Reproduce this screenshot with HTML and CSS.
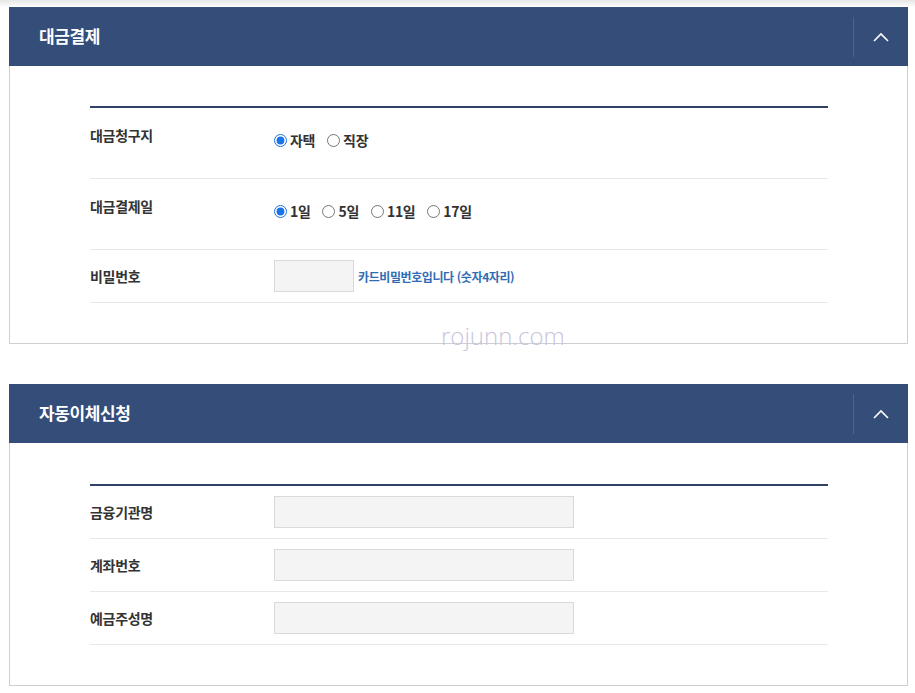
FILE: index.html
```html
<!DOCTYPE html>
<html lang="ko">
<head>
    <meta charset="UTF-8">
    <meta name="viewport" content="width=device-width, initial-scale=1.0">
    <title>결제 정보</title>
    <link rel="stylesheet" href="styles.css">
</head>
<body>
    <div class="wrap">
        <section class="panel">
            <div class="panel-head">
                <h2>대금결제</h2>
                <button class="toggle" type="button">
                    <svg width="16" height="10" viewBox="0 0 16 10"><path d="M1 9 L8 2 L15 9" fill="none" stroke="#fff" stroke-width="1.6"/></svg>
                </button>
            </div>
            <div class="panel-body">
                <table class="form-table">
                    <tr class="tall">
                        <th>대금청구지</th>
                        <td>
                            <label class="radio"><input type="radio" name="addr" checked>자택</label>
                            <label class="radio"><input type="radio" name="addr">직장</label>
                        </td>
                    </tr>
                    <tr class="tall">
                        <th>대금결제일</th>
                        <td>
                            <label class="radio"><input type="radio" name="day" checked>1일</label>
                            <label class="radio"><input type="radio" name="day">5일</label>
                            <label class="radio"><input type="radio" name="day">11일</label>
                            <label class="radio"><input type="radio" name="day">17일</label>
                        </td>
                    </tr>
                    <tr>
                        <th>비밀번호</th>
                        <td>
                            <input class="field short" type="password"><span class="hint">카드비밀번호입니다 (숫자4자리)</span>
                        </td>
                    </tr>
                </table>
            </div>
            <div class="watermark">rojunn.com</div>
        </section>

        <section class="panel">
            <div class="panel-head">
                <h2>자동이체신청</h2>
                <button class="toggle" type="button">
                    <svg width="16" height="10" viewBox="0 0 16 10"><path d="M1 9 L8 2 L15 9" fill="none" stroke="#fff" stroke-width="1.6"/></svg>
                </button>
            </div>
            <div class="panel-body loose">
                <table class="form-table">
                    <tr>
                        <th>금융기관명</th>
                        <td><input class="field" type="text"></td>
                    </tr>
                    <tr>
                        <th>계좌번호</th>
                        <td><input class="field" type="text"></td>
                    </tr>
                    <tr>
                        <th>예금주성명</th>
                        <td><input class="field" type="text"></td>
                    </tr>
                </table>
            </div>
        </section>
    </div>
</body>
</html>
```

FILE: styles.css
```css
body {
    margin: 0;
    font-family: "Noto Sans CJK KR", "Noto Sans", sans-serif;
    color: #333;
    background: linear-gradient(#e6e6e6, #f6f6f6 5px, #fff 7px);
}

.wrap {
    padding: 7px 7px 0 9px;
    width: 899px;
}

.panel {
    position: relative;
    margin-bottom: 40px;
}

.panel-head {
    display: flex;
    align-items: center;
    justify-content: space-between;
    height: 59px;
    background: #344d79;
}

.panel-head h2 {
    margin: 0 0 2px 30px;
    font-size: 17px;
    font-weight: 700;
    color: #fff;
    letter-spacing: -0.4px;
}

.toggle {
    display: flex;
    align-items: center;
    justify-content: center;
    width: 55px;
    height: 40px;
    padding: 0;
    border: none;
    border-left: 1px solid #4b6391;
    background: none;
}

.panel-body {
    padding: 40px 80px 40px 80px;
    border: 1px solid #cfcfcf;
    border-top: none;
}

.panel-body.loose {
    padding-top: 41px;
}

.form-table {
    width: 738px;
    border-collapse: collapse;
    border-top: 2px solid #2f4266;
}

.form-table th,
.form-table td {
    height: 32px;
    padding: 10px 0;
    border-bottom: 1px solid #e8e8e8;
    font-size: 14px;
    vertical-align: middle;
}

.form-table th {
    width: 184px;
    text-align: left;
    font-weight: 700;
    letter-spacing: -0.3px;
}

.form-table tr.tall th {
    height: 33px;
    padding: 17px 0 20px;
    vertical-align: top;
}

.form-table tr.tall td {
    padding: 22px 0 15px;
    vertical-align: top;
}

.radio {
    display: inline-flex;
    align-items: center;
    margin-right: 8px;
    font-weight: 700;
    letter-spacing: -0.3px;
}

.radio input {
    width: 13px;
    height: 13px;
    margin: 0 3px 0 0;
    accent-color: #1a73e8;
}

.field {
    box-sizing: border-box;
    width: 300px;
    height: 32px;
    border: 1px solid #dadada;
    background: #f4f4f4;
    vertical-align: middle;
}

.field.short {
    width: 80px;
}

.hint {
    margin-left: 4px;
    font-size: 12px;
    font-weight: 700;
    color: #2f6cb3;
    letter-spacing: -0.4px;
    vertical-align: middle;
}

.watermark {
    position: absolute;
    left: 432px;
    bottom: -8px;
    font-family: "Open Sans", sans-serif;
    font-weight: 300;
    font-size: 24px;
    color: #c9c5dd;
}
```
